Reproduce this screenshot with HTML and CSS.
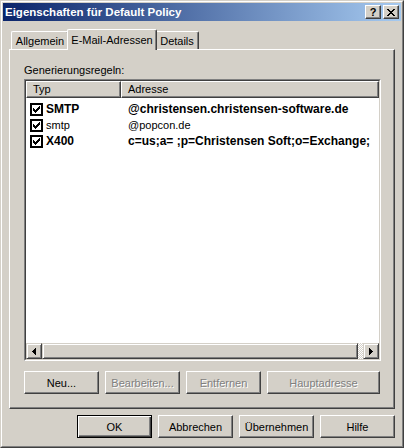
FILE: index.html
```html
<!DOCTYPE html>
<html lang="de">
<head>
<meta charset="utf-8">
<title>Eigenschaften für Default Policy</title>
<link rel="stylesheet" href="styles.css">
</head>
<body>
<div class="window">
  <div class="frame">
    <div class="titlebar">
      <span class="title">Eigenschaften für Default Policy</span>
      <button class="capbtn help">?</button>
      <button class="capbtn close" aria-label="Schließen">
        <svg width="8" height="7" viewBox="0 0 8 7" shape-rendering="crispEdges"><path d="M0 0h2v1h-2z M6 0h2v1h-2z M1 1h2v1h-2z M5 1h2v1h-2z M2 2h4v1h-4z M3 3h2v1h-2z M2 4h4v1h-4z M1 5h2v1h-2z M5 5h2v1h-2z M0 6h2v1h-2z M6 6h2v1h-2z" fill="#000"/></svg>
      </button>
    </div>
    <div class="client">
      <div class="tabstrip">
        <div class="tab t1">Allgemein</div>
        <div class="tab active">E-Mail-Adressen</div>
        <div class="tab t3">Details</div>
      </div>
      <div class="panel">
        <div class="label">Generierungsregeln:</div>
        <div class="list">
          <div class="list-inner">
            <div class="header">
              <div class="hcol c1">Typ</div>
              <div class="hcol c2">Adresse</div>
            </div>
            <div class="rows">
              <div class="row">
                <div class="cell1">
                  <svg class="cb" width="13" height="13" viewBox="0 0 13 13" shape-rendering="crispEdges"><rect x="0" y="0" width="13" height="13" fill="#000"/><rect x="2" y="2" width="9" height="9" fill="#fff"/><path d="M9 3h1v1h-1z M8 4h2v1h-2z M3 5h1v1h-1z M7 5h3v1h-3z M3 6h2v1h-2z M6 6h3v1h-3z M3 7h5v1h-5z M4 8h3v1h-3z M5 9h1v1h-1z" fill="#000"/></svg>
                  <span class="bold">SMTP</span>
                </div>
                <div class="cell2 bold">@christensen.christensen-software.de</div>
              </div>
              <div class="row">
                <div class="cell1">
                  <svg class="cb" width="13" height="13" viewBox="0 0 13 13" shape-rendering="crispEdges"><rect x="0" y="0" width="13" height="13" fill="#000"/><rect x="2" y="2" width="9" height="9" fill="#fff"/><path d="M9 3h1v1h-1z M8 4h2v1h-2z M3 5h1v1h-1z M7 5h3v1h-3z M3 6h2v1h-2z M6 6h3v1h-3z M3 7h5v1h-5z M4 8h3v1h-3z M5 9h1v1h-1z" fill="#000"/></svg>
                  <span>smtp</span>
                </div>
                <div class="cell2">@popcon.de</div>
              </div>
              <div class="row">
                <div class="cell1">
                  <svg class="cb" width="13" height="13" viewBox="0 0 13 13" shape-rendering="crispEdges"><rect x="0" y="0" width="13" height="13" fill="#000"/><rect x="2" y="2" width="9" height="9" fill="#fff"/><path d="M9 3h1v1h-1z M8 4h2v1h-2z M3 5h1v1h-1z M7 5h3v1h-3z M3 6h2v1h-2z M6 6h3v1h-3z M3 7h5v1h-5z M4 8h3v1h-3z M5 9h1v1h-1z" fill="#000"/></svg>
                  <span class="bold">X400</span>
                </div>
                <div class="cell2 bold">c=us;a= ;p=Christensen Soft;o=Exchange;</div>
              </div>
            </div>
            <div class="hscroll">
              <div class="sbtn">
                <svg width="4" height="7" viewBox="0 0 4 7" shape-rendering="crispEdges"><path d="M3 0h1v7h-1z M2 1h1v5h-1z M1 2h1v3h-1z M0 3h1v1h-1z" fill="#000"/></svg>
              </div>
              <div class="thumb"></div>
              <div class="track"></div>
              <div class="sbtn">
                <svg width="4" height="7" viewBox="0 0 4 7" shape-rendering="crispEdges"><path d="M0 0h1v7h-1z M1 1h1v5h-1z M2 2h1v3h-1z M3 3h1v1h-1z" fill="#000"/></svg>
              </div>
            </div>
          </div>
        </div>
        <div class="btnrow">
          <button class="btn">Neu...</button>
          <button class="btn disabled">Bearbeiten...</button>
          <button class="btn disabled">Entfernen</button>
          <button class="btn wide disabled">Hauptadresse</button>
        </div>
      </div>
      <div class="dlgbtns">
        <button class="btn default">OK</button>
        <button class="btn">Abbrechen</button>
        <button class="btn">Übernehmen</button>
        <button class="btn">Hilfe</button>
      </div>
    </div>
  </div>
</div>
</body>
</html>
```
FILE: styles.css
```css
* { box-sizing: border-box; }

body {
  margin: 0;
  background: #D4D0C8;
  font-family: "Liberation Sans", Arial, sans-serif;
  font-size: 11px;
  color: #000;
}

.window {
  width: 404px;
  height: 448px;
  border: 1px solid;
  border-color: #D4D0C8 #404040 #404040 #D4D0C8;
  background: #D4D0C8;
}

.frame {
  height: 100%;
  border: 1px solid;
  border-color: #fff #808080 #808080 #fff;
  padding: 1px;
  display: flex;
  flex-direction: column;
}

.titlebar {
  flex: none;
  height: 18px;
  display: flex;
  align-items: center;
  padding: 0 2px 0 2px;
  background: linear-gradient(to right, #0A246A, #A6CAF0);
}

.title {
  flex: 1;
  color: #fff;
  font-weight: bold;
  font-size: 11.5px;
  white-space: nowrap;
}

.capbtn {
  width: 16px;
  height: 14px;
  padding: 0;
  margin: 0;
  border: 1px solid;
  border-color: #fff #404040 #404040 #fff;
  box-shadow: inset -1px -1px #808080;
  background: #D4D0C8;
  display: flex;
  align-items: center;
  justify-content: center;
  font-family: "Liberation Sans", Arial, sans-serif;
  font-weight: bold;
  font-size: 11px;
  line-height: 12px;
  color: #000;
}

.capbtn.close { margin-left: 2px; }

.client {
  flex: 1;
  padding: 8px 6px 0 6px;
  display: flex;
  flex-direction: column;
}

.tabstrip {
  height: 20px;
  display: flex;
  align-items: flex-end;
  padding-left: 2px;
  position: relative;
  z-index: 1;
}

.tab {
  height: 18px;
  display: flex;
  align-items: center;
  justify-content: center;
  border-top: 1px solid #fff;
  border-left: 1px solid #fff;
  border-right: 1px solid #404040;
  box-shadow: inset -1px 0 #808080;
  border-radius: 2px 2px 0 0;
  background: #D4D0C8;
  white-space: nowrap;
}

.tab.t1 { width: 58px; }
.tab.t3 { width: 44px; }

.tab.active {
  width: 90px;
  height: 21px;
  margin: 0 -2px -1px -2px;
  padding-bottom: 1px;
  position: relative;
  z-index: 2;
}

.panel {
  flex: none;
  height: 360px;
  border: 1px solid;
  border-color: #fff #404040 #404040 #fff;
  box-shadow: inset -1px -1px #808080;
  padding: 14px 12px 0 14px;
}

.label {
  height: 13px;
  line-height: 13px;
}

.list {
  margin-top: 2px;
  width: 357px;
  height: 282px;
  border: 1px solid;
  border-color: #808080 #fff #fff #808080;
}

.list-inner {
  height: 100%;
  border: 1px solid;
  border-color: #404040 #D4D0C8 #D4D0C8 #404040;
  background: #fff;
  display: flex;
  flex-direction: column;
}

.header {
  flex: none;
  height: 17px;
  display: flex;
  background: #D4D0C8;
}

.hcol {
  border: 1px solid;
  border-color: #fff #404040 #404040 #fff;
  box-shadow: inset -1px -1px #808080;
  padding-left: 6px;
  line-height: 14px;
  white-space: nowrap;
}

.hcol.c1 { width: 95px; }
.hcol.c2 { flex: 1; }

.rows {
  flex: 1;
  padding-top: 3px;
}

.row {
  height: 16px;
  display: flex;
  align-items: center;
}

.cell1 {
  width: 95px;
  display: flex;
  align-items: center;
  padding-left: 4px;
}

.cb {
  flex: none;
  margin-right: 3px;
}

.cell2 {
  padding-left: 7px;
  white-space: nowrap;
}

.bold {
  font-weight: bold;
  font-size: 12px;
}

.hscroll {
  flex: none;
  height: 16px;
  display: flex;
}

.sbtn {
  width: 16px;
  height: 16px;
  border: 1px solid;
  border-color: #D4D0C8 #404040 #404040 #D4D0C8;
  box-shadow: inset 1px 1px #fff, inset -1px -1px #808080;
  background: #D4D0C8;
  display: flex;
  align-items: center;
  justify-content: center;
}

.thumb {
  width: 316px;
  height: 16px;
  border: 1px solid;
  border-color: #D4D0C8 #404040 #404040 #D4D0C8;
  box-shadow: inset 1px 1px #fff, inset -1px -1px #808080;
  background: #D4D0C8;
}

.track {
  flex: 1;
  background: repeating-conic-gradient(#fff 0 25%, #D4D0C8 0 50%) 0 0 / 2px 2px;
}

.btnrow {
  display: flex;
  gap: 6px;
  margin-top: 10px;
}

.btn {
  width: 75px;
  height: 23px;
  padding: 0;
  margin: 0;
  border: 1px solid;
  border-color: #fff #404040 #404040 #fff;
  box-shadow: inset -1px -1px #808080;
  background: #D4D0C8;
  font-family: "Liberation Sans", Arial, sans-serif;
  font-size: 11px;
  color: #000;
  white-space: nowrap;
}

.btn.wide { width: 113px; }

.btn.disabled {
  color: #808080;
  text-shadow: 1px 1px 0 #fff;
}

.btn.default {
  border-color: #000;
  box-shadow: inset 1px 1px #fff, inset -1px -1px #404040, inset -2px -2px #808080;
}

.dlgbtns {
  display: flex;
  justify-content: flex-end;
  gap: 6px;
  margin-top: 6px;
}
```
